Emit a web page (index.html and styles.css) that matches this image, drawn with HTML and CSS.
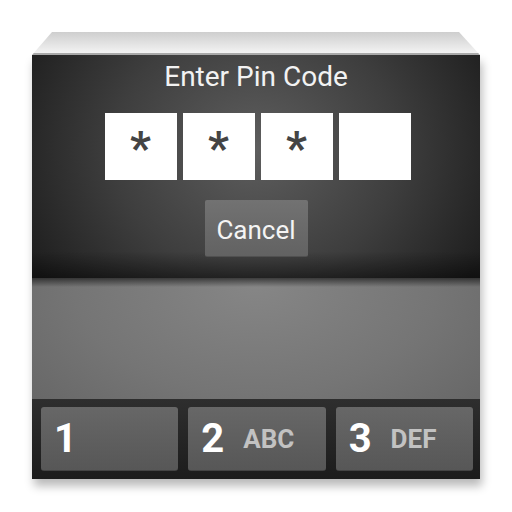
FILE: index.html
```html
<!DOCTYPE html>
<html>
<head>
<meta charset="utf-8">
<link rel="stylesheet" href="styles.css">
</head>
<body>
<div class="device">
  <div class="bevel"></div>
  <div class="body">
    <div class="screen">
      <div class="title">Enter Pin Code</div>
      <div class="pins">
        <div class="pin">*</div>
        <div class="pin">*</div>
        <div class="pin">*</div>
        <div class="pin"></div>
      </div>
      <div class="cancel">Cancel</div>
    </div>
    <div class="gray"></div>
    <div class="keypad">
      <div class="key"><span class="digit">1</span></div>
      <div class="key"><span class="digit">2</span><span class="letters">ABC</span></div>
      <div class="key"><span class="digit">3</span><span class="letters">DEF</span></div>
    </div>
  </div>
</div>
</body>
</html>
```
FILE: styles.css
```css
html, body {
  margin: 0;
  padding: 0;
  background: #ffffff;
}
body {
  width: 512px;
  height: 512px;
  font-family: Roboto, "Liberation Sans", sans-serif;
}
.device {
  padding: 32px 32px 0 32px;
  width: 448px;
}
.bevel {
  height: 21px;
  background: linear-gradient(#cecece, #f3f3f3);
  clip-path: polygon(20px 0, calc(100% - 21px) 0, 100% 100%, 0 100%);
  border-bottom: 2px solid #a9a9a9;
  box-sizing: content-box;
}
.body {
  box-shadow: 2px 7px 9px rgba(0, 0, 0, 0.28);
}
.screen {
  height: 223px;
  box-sizing: border-box;
  padding-top: 5px;
  display: flex;
  flex-direction: column;
  align-items: center;
  background:
    linear-gradient(to bottom, rgba(0,0,0,0) 88%, rgba(0,0,0,0.45) 100%),
    radial-gradient(ellipse 260px 230px at 50% 42%, #5e5e5e 0%, #3e3e3e 55%, #1e1e1e 100%);
}
.title {
  color: #f2f2f2;
  font-size: 28px;
  line-height: 33px;
}
.pins {
  margin-top: 20px;
  margin-left: 3px;
  display: flex;
  gap: 6px;
}
.pin {
  width: 72px;
  height: 67px;
  background: #ffffff;
  color: #444444;
  font-size: 46px;
  font-weight: 700;
  display: flex;
  justify-content: center;
  align-items: flex-start;
  line-height: 1;
  padding-top: 12px;
  box-sizing: border-box;
}
.cancel {
  margin-top: 20px;
  width: 103px;
  height: 57px;
  box-sizing: border-box;
  padding-top: 4px;
  background: linear-gradient(#727272, #626262);
  border-radius: 2px;
  border-bottom: 1px solid #505050;
  color: #f4f4f4;
  font-size: 26px;
  display: flex;
  align-items: center;
  justify-content: center;
}
.gray {
  height: 121px;
  background:
    linear-gradient(to bottom, rgba(0,0,0,0.55) 0px, rgba(0,0,0,0) 9px),
    radial-gradient(ellipse 330px 200px at 50% 5%, #868686 0%, #757575 55%, #636363 100%);
}
.keypad {
  height: 80px;
  box-sizing: border-box;
  padding: 8px 7px 8px 9px;
  display: flex;
  gap: 10px;
  background: linear-gradient(#2e2e2e, #1c1c1c);
}
.key {
  flex: 1;
  border-radius: 3px;
  background: linear-gradient(#676767, #575757);
  border-bottom: 1px solid #444;
  display: flex;
  align-items: center;
  padding-left: 13px;
  box-sizing: border-box;
}
.digit {
  color: #ffffff;
  font-size: 40px;
  font-weight: 700;
}
.letters {
  color: #c2c2c2;
  font-size: 26px;
  font-weight: 700;
  margin-left: 19px;
}
```
